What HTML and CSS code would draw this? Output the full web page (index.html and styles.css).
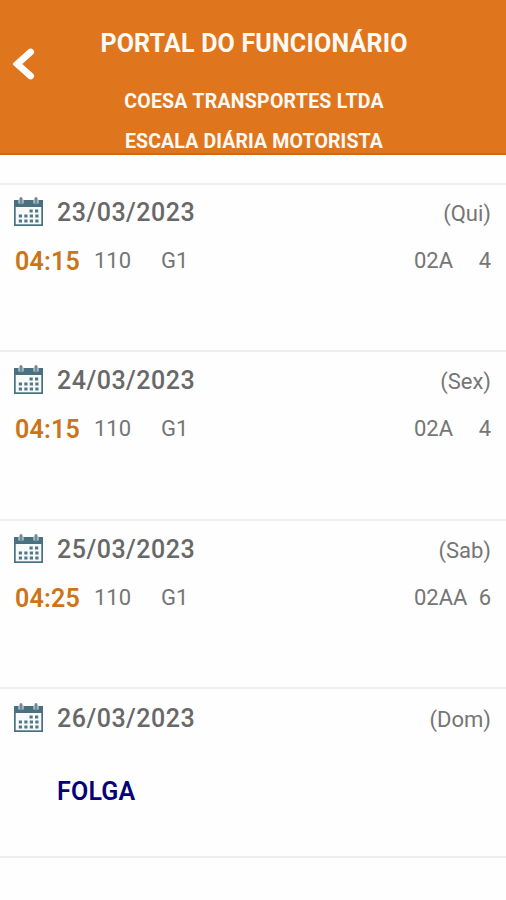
FILE: index.html
```html
<!DOCTYPE html>
<html lang="pt-BR">
<head>
<meta charset="utf-8">
<title>Portal do Funcionário</title>
<link rel="stylesheet" href="styles.css">
</head>
<body>
<svg class="defs" aria-hidden="true">
  <symbol id="calendar" viewBox="0 0 29 29">
    <path class="cal-frame" d="M0 3h29v26H0z"/>
    <path class="cal-page" d="M1.700 10h25.600v17.300H1.700z"/>
    <path class="cal-hole" d="M4.500 2h5v4.500h-5zM19.500 2h5v4.500h-5z"/>
    <path class="cal-ring" d="M7 1.500v4.500M22 1.500v4.500"/>
    <path class="cal-days" d="M15.500 14h9.500M4.800 19h20.200M4.800 24h20.200"/>
  </symbol>
</svg>
<header class="header">
  <svg class="back" viewBox="0 0 22 32"><path d="M17.600 4 4.200 16 17.600 28"/></svg>
  <div class="titles">
    <h1 class="title">PORTAL DO FUNCIONÁRIO</h1>
    <p class="company">COESA TRANSPORTES LTDA</p>
    <p class="screen">ESCALA DIÁRIA MOTORISTA</p>
  </div>
</header>
<main class="list">
  <section class="day">
    <div class="head"><svg class="icon"><use href="#calendar"/></svg><span class="date">23/03/2023</span><span class="week">(Qui)</span></div>
    <div class="shift"><span class="time">04:15</span><span class="line">110</span><span class="group">G1</span><span class="table">02A</span><span class="num">4</span></div>
  </section>
  <section class="day">
    <div class="head"><svg class="icon"><use href="#calendar"/></svg><span class="date">24/03/2023</span><span class="week">(Sex)</span></div>
    <div class="shift"><span class="time">04:15</span><span class="line">110</span><span class="group">G1</span><span class="table">02A</span><span class="num">4</span></div>
  </section>
  <section class="day">
    <div class="head"><svg class="icon"><use href="#calendar"/></svg><span class="date">25/03/2023</span><span class="week">(Sab)</span></div>
    <div class="shift"><span class="time">04:25</span><span class="line">110</span><span class="group">G1</span><span class="table">02AA</span><span class="num">6</span></div>
  </section>
  <section class="day">
    <div class="head"><svg class="icon"><use href="#calendar"/></svg><span class="date">26/03/2023</span><span class="week">(Dom)</span></div>
    <p class="off">FOLGA</p>
  </section>
</main>
</body>
</html>
```
FILE: styles.css
```css
* { box-sizing: border-box; }
body {
  margin: 0;
  background: #fefefe;
  color: #757575;
  font-family: Roboto, "Liberation Sans", sans-serif;
}
.defs { display: block; width: 0; height: 0; }
.header {
  display: grid;
  grid-template-columns: 36px 1fr 34px;
  height: 155px;
  background: #df761e;
  border-bottom: 2px solid #d66812;
  color: #fffaf5;
}
.back {
  width: 22px;
  height: 32px;
  margin: 48px 0 0 13px;
  fill: none;
  stroke: #fff;
  stroke-width: 6.800;
  stroke-linecap: round;
}
.titles { text-align: center; white-space: nowrap; }
.titles > * { margin: 0; font-weight: 700; }
.title { padding-top: 29px; font-size: 25px; line-height: 30px; letter-spacing: 0.200px; }
.titles .company { margin-top: 28px; font-size: 19.500px; line-height: 30px; letter-spacing: 0.260px; }
.titles .screen { margin-top: 10px; font-size: 19.500px; line-height: 30px; letter-spacing: 0.130px; }
.list { padding-top: 28px; }
.day {
  height: 168.700px;
  border-top: 2px solid #efefef;
}
.day:first-child { height: 167px; }
.day:last-child { height: 171px; border-bottom: 2px solid #efefef; }
.head {
  display: grid;
  grid-template-columns: 43px 1fr auto;
  align-items: center;
  height: 54px;
  padding: 0 15px 0 14px;
}
.day + .day .head { height: 55.700px; padding-top: 1.700px; }
.icon { width: 29px; height: 29px; margin-top: -2px; }
.cal-frame { fill: #48707f; }
.cal-page { fill: #f7fafb; }
.cal-hole { fill: #dbe4e8; }
.cal-ring { stroke: #708b97; stroke-width: 3; stroke-linecap: round; }
.cal-days { fill: none; stroke: #537786; stroke-width: 3.200; stroke-dasharray: 3.200 2.300; }
.date { font-size: 25px; font-weight: 500; letter-spacing: 0.500px; color: #686868; }
.week { font-size: 22px; padding-top: 2px; }
.shift {
  display: grid;
  grid-template-columns: 79px 67px 1fr 58px 19px;
  align-items: center;
  height: 42px;
  padding: 0 15px;
  font-size: 22px;
}
.time { padding-top: 2px; font-size: 25px; font-weight: 600; letter-spacing: 0.200px; color: #cc7417; }
.num { text-align: right; }
.off {
  margin: 31px 0 0 57px;
  font-size: 25px;
  line-height: 32px;
  font-weight: 600;
  letter-spacing: 0.200px;
  color: #050078;
}
```
